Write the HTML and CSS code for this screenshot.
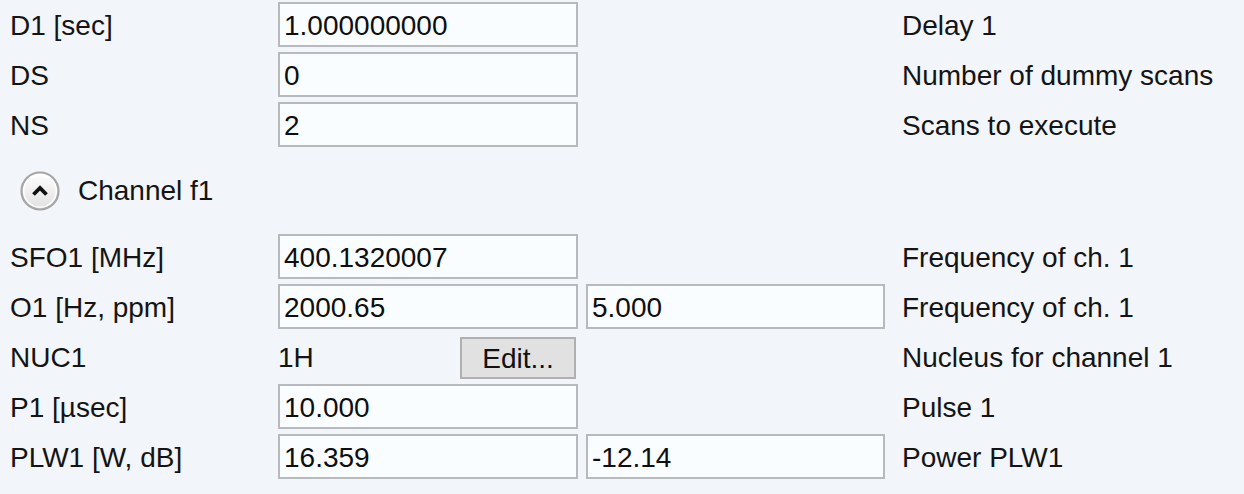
FILE: index.html
```html
<!DOCTYPE html>
<html>
<head>
<meta charset="utf-8">
<link rel="stylesheet" href="styles.css">
</head>
<body>
<div class="page">
  <div class="grid">
    <div class="label">D1 [sec]</div>
    <div class="field">1.000000000</div>
    <div class="empty"></div>
    <div class="desc">Delay 1</div>

    <div class="label">DS</div>
    <div class="field">0</div>
    <div class="empty"></div>
    <div class="desc">Number of dummy scans</div>

    <div class="label">NS</div>
    <div class="field">2</div>
    <div class="empty"></div>
    <div class="desc">Scans to execute</div>
  </div>

  <div class="section">
    <span class="toggle">
      <svg width="40" height="40" viewBox="0 0 40 40">
        <defs>
          <linearGradient id="g" x1="0" y1="0" x2="0" y2="1">
            <stop offset="0" stop-color="#ffffff"/>
            <stop offset="1" stop-color="#e0e0e0"/>
          </linearGradient>
        </defs>
        <circle cx="20" cy="20" r="18.5" fill="url(#g)" stroke="#a5a5a5" stroke-width="2.2"/>
        <circle cx="20" cy="20" r="16.2" fill="none" stroke="#ffffff" stroke-width="1.2"/>
        <path d="M13.5 23.5 L20 17 L26.5 23.5" fill="none" stroke="#111" stroke-width="3.8" stroke-linejoin="miter" stroke-linecap="butt"/>
      </svg>
    </span>
    <span class="section-title">Channel f1</span>
  </div>

  <div class="grid">
    <div class="label">SFO1 [MHz]</div>
    <div class="field">400.1320007</div>
    <div class="empty"></div>
    <div class="desc">Frequency of ch. 1</div>

    <div class="label">O1 [Hz, ppm]</div>
    <div class="field">2000.65</div>
    <div class="field">5.000</div>
    <div class="desc">Frequency of ch. 1</div>

    <div class="label">NUC1</div>
    <div class="nuc">
      <span class="nuc-value">1H</span>
      <button class="btn">Edit...</button>
    </div>
    <div class="empty"></div>
    <div class="desc">Nucleus for channel 1</div>

    <div class="label">P1 [µsec]</div>
    <div class="field">10.000</div>
    <div class="empty"></div>
    <div class="desc">Pulse 1</div>

    <div class="label">PLW1 [W, dB]</div>
    <div class="field">16.359</div>
    <div class="field">-12.14</div>
    <div class="desc">Power PLW1</div>
  </div>
</div>
</body>
</html>
```

FILE: styles.css
```css
html, body {
  margin: 0;
  padding: 0;
  background: #f2f5f9;
}

body {
  font-family: "Liberation Sans", Arial, sans-serif;
  font-size: 28px;
  color: #111;
  width: 1244px;
  height: 494px;
  overflow: hidden;
}

.page {
  padding: 2px 0 0 10px;
}

.grid {
  display: grid;
  grid-template-columns: 260px 300px 299px 1fr;
  column-gap: 8px;
  row-gap: 5px;
}

.grid .desc {
  margin-left: 9px;
}

.label,
.desc {
  box-sizing: border-box;
  height: 45px;
  padding-top: 3px;
  display: flex;
  align-items: center;
  white-space: nowrap;
  color: #141414;
}

.field {
  box-sizing: border-box;
  height: 45px;
  border: 2px solid #b7babd;
  background: #f9fdff;
  padding: 3px 6px 0 4px;
  display: flex;
  align-items: center;
  white-space: nowrap;
  color: #0e0e0e;
}

.nuc {
  display: flex;
  align-items: center;
  justify-content: space-between;
  height: 45px;
}

.nuc-value {
  padding-top: 3px;
  color: #141414;
}

.btn {
  box-sizing: border-box;
  width: 116px;
  height: 42px;
  margin-right: 2px;
  margin-top: 2px;
  border: 2px solid #b0b0b0;
  background: #e1e1e1;
  font-family: inherit;
  font-size: 28px;
  color: #111;
  padding: 2px 0 0;
}

.section {
  display: flex;
  align-items: center;
  height: 87px;
  padding-left: 10px;
}

.toggle {
  display: flex;
  width: 40px;
  height: 40px;
}

.section-title {
  margin-left: 18px;
  color: #141414;
}
```
